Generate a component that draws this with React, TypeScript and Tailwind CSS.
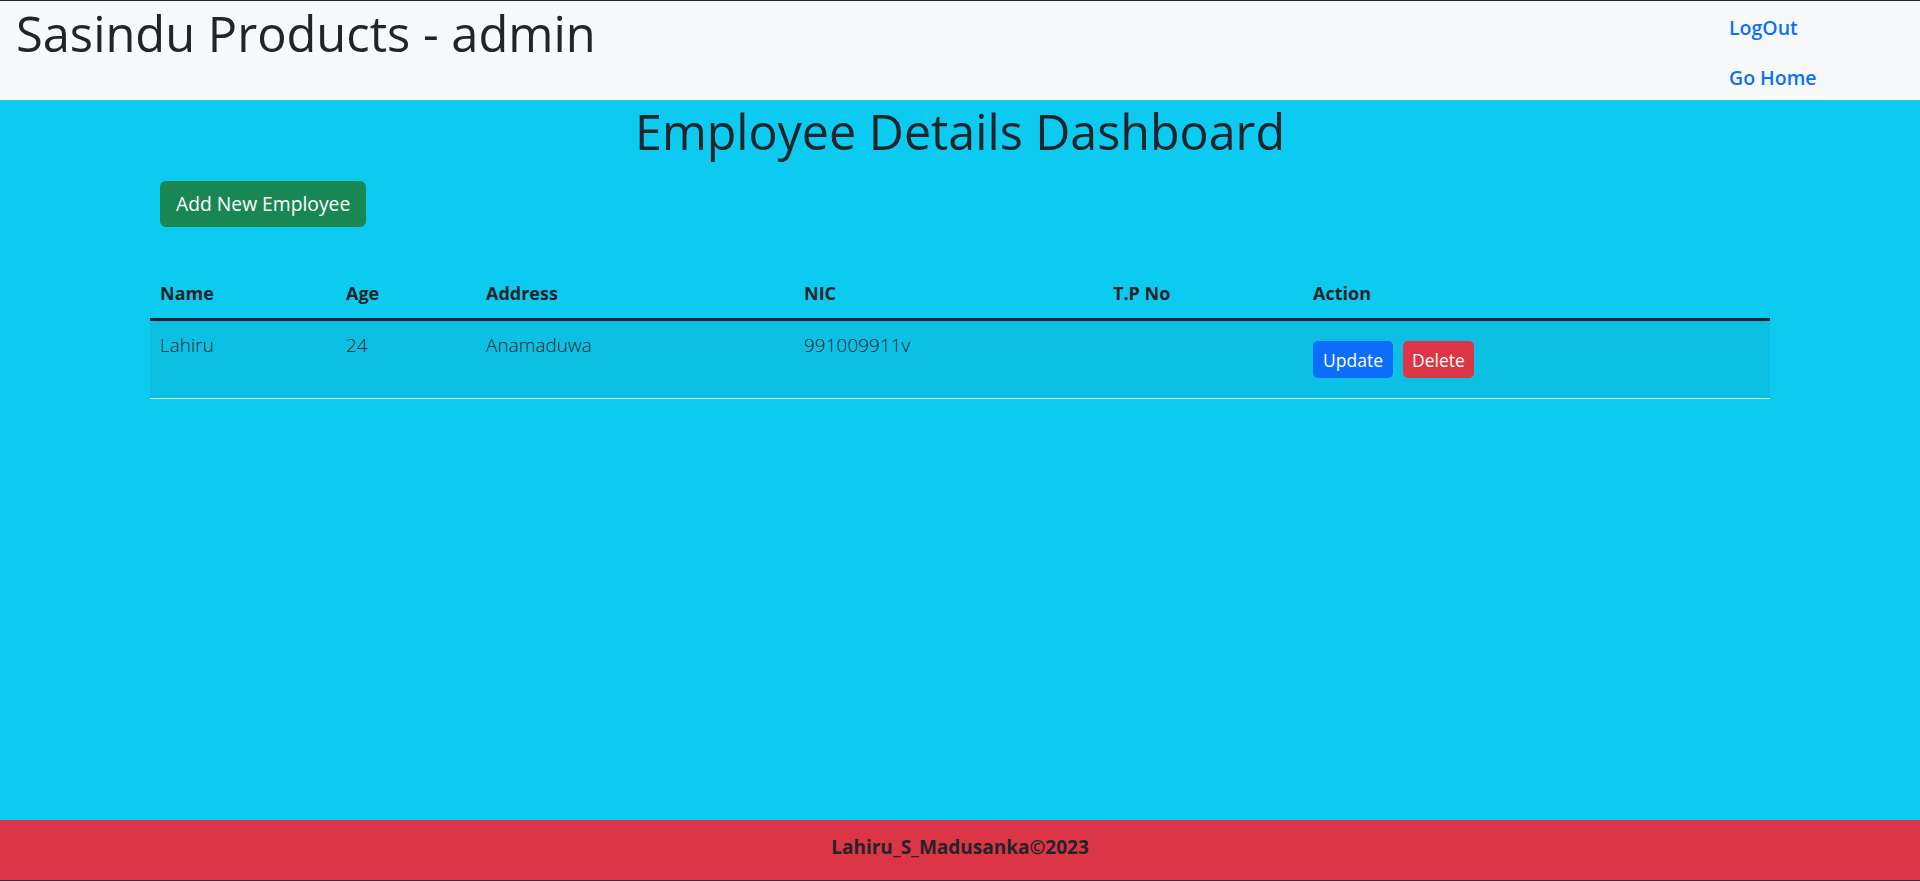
const font = { fontFamily: '"Open Sans", "Noto Sans", sans-serif' };

const employees = [
  { name: "Lahiru", age: "24", address: "Anamaduwa", nic: "991009911v", tp: "" },
];

export default function App() {
  return (
    <div
      className="h-[881px] flex flex-col bg-[#0dcaf0] text-[#212529] text-[20px] leading-[30px] overflow-hidden"
      style={font}
    >
      <nav className="h-[100px] shrink-0 bg-[#f8f9fa] border-t border-[#212529] flex justify-between">
        <h1 className="pl-[16px] pt-[1px] text-[48.8px] leading-[62px] font-normal">
          Sasindu Products - admin
        </h1>
        <div className="w-[191px] flex flex-col pt-[2px]">
          <a className="py-[10px] font-semibold text-[19.5px] text-[#0d6efd]">LogOut</a>
          <a className="py-[10px] font-semibold text-[19.5px] text-[#0d6efd]">Go Home</a>
        </div>
      </nav>

      <main className="flex-1">
        <h1 className="text-center text-[48.4px] leading-[62px] font-normal">
          Employee Details Dashboard
        </h1>
        <div className="w-[1620px] mx-auto">
          <button className="mt-[19px] ml-[10px] h-[46px] px-[16px] rounded-[6px] bg-[#198754] text-white text-[19.3px]">
            Add New Employee
          </button>

          <table className="mt-[41px] w-full table-fixed border-collapse text-[18px]">
            <thead>
              <tr className="border-b-[3px] border-[#212529]">
                <th className="w-[186px] text-left font-bold px-[10px] py-[10px]">Name</th>
                <th className="w-[140px] text-left font-bold px-[10px] py-[10px]">Age</th>
                <th className="w-[318px] text-left font-bold px-[10px] py-[10px]">Address</th>
                <th className="w-[309px] text-left font-bold px-[10px] py-[10px]">NIC</th>
                <th className="w-[200px] text-left font-bold px-[10px] py-[10px]">T.P No</th>
                <th className="text-left font-bold px-[10px] py-[10px]">Action</th>
              </tr>
            </thead>
            <tbody>
              {employees.map((e) => (
                <tr key={e.nic} className="bg-[#0cc0e4] border-b border-[#d6f3fa]">
                  <td className="align-top px-[10px] py-[9px] font-light text-[19px]">{e.name}</td>
                  <td className="align-top px-[10px] py-[9px] font-light text-[19px]">{e.age}</td>
                  <td className="align-top px-[10px] py-[9px] font-light text-[19px]">{e.address}</td>
                  <td className="align-top px-[10px] py-[9px] font-light text-[19px]">{e.nic}</td>
                  <td className="align-top px-[10px] py-[9px] font-light text-[19px]">{e.tp}</td>
                  <td className="align-top px-[10px] pt-[20px] pb-[20px]">
                    <div className="flex gap-[10px]">
                      <button className="h-[37px] px-[10px] rounded-[5px] bg-[#0d6efd] text-white text-[17.5px]">
                        Update
                      </button>
                      <button className="h-[37px] px-[9px] rounded-[5px] bg-[#dc3545] text-white text-[17.5px]">
                        Delete
                      </button>
                    </div>
                  </td>
                </tr>
              ))}
            </tbody>
          </table>
        </div>
      </main>

      <footer className="h-[61px] shrink-0 bg-[#dc3545] border-b border-[#2b3340] flex items-center justify-center pb-[6px]">
        <p className="font-bold text-[19px]">Lahiru_S_Madusanka©2023</p>
      </footer>
    </div>
  );
}
